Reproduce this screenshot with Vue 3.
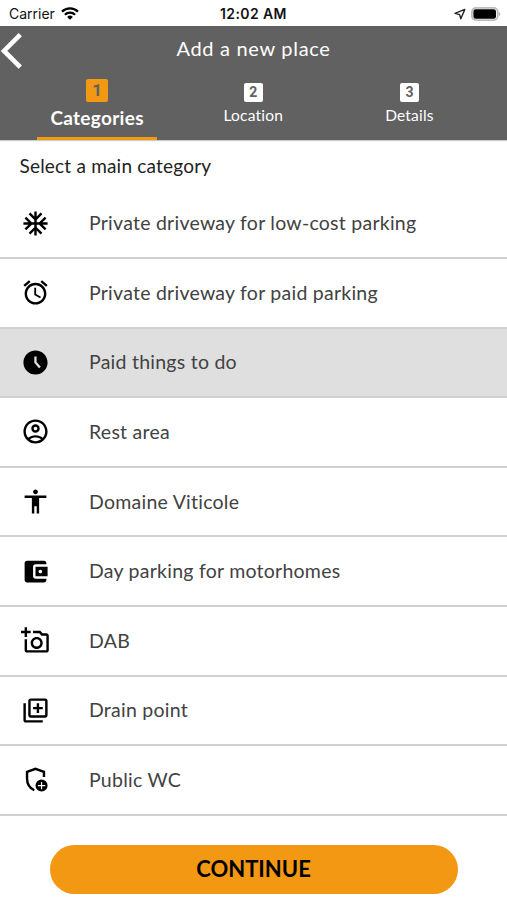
<template>
  <div class="screen">
    <div class="status-bar">
      <div class="carrier">
        <span>Carrier</span>
        <svg class="wifi" viewBox="0 0 18 13" fill="none" stroke="#000" stroke-width="2.3">
          <path d="M1 4.6a11.4 11.4 0 0 1 16 0" />
          <path d="M3.9 7.7a7.2 7.2 0 0 1 10.2 0" />
          <path d="M9 12.8L6.1 9.9a4.1 4.1 0 0 1 5.8 0z" fill="#000" stroke="none" />
        </svg>
      </div>
      <span class="time">12:02 AM</span>
      <div class="indicators">
        <svg class="arrow" viewBox="0 0 12 12" fill="none" stroke="#222" stroke-width="1.4" stroke-linejoin="round">
          <path d="M1 5.4L10.8 1.4 6.8 10.8 5.6 6.6z" />
        </svg>
        <svg class="battery" viewBox="0 0 30 14">
          <rect x="0.9" y="0.9" width="25.8" height="12.2" rx="3.8" fill="#fff" stroke="#bdbdbd" stroke-width="1.8" />
          <rect x="2.4" y="2.3" width="22.6" height="9.4" rx="2.2" fill="#000" />
          <path d="M27.8 4.8c2 .8 2 3.6 0 4.4z" fill="#b5b5b5" />
        </svg>
      </div>
    </div>

    <header class="header">
      <div class="title-bar">
        <svg class="back" viewBox="0 0 24 36" fill="none" stroke="#fff" stroke-width="4.6">
          <path d="M20.3 1.6L4 18l16.3 16.2" />
        </svg>
        <h1>Add a new place</h1>
      </div>
      <nav class="tabs">
        <div v-for="(tab, i) in tabs" :key="tab" class="tab" :class="{ active: i === activeTab }" @click="activeTab = i">
          <span class="step">{{ i + 1 }}</span>
          <span class="tab-label">{{ tab }}</span>
        </div>
      </nav>
    </header>

    <p class="subtitle">Select a main category</p>

    <ul class="list">
      <li
        v-for="(item, i) in categories"
        :key="item.name"
        :class="{ selected: i === selected }"
        @click="selected = i"
      >
        <svg class="icon" viewBox="0 0 24 24">
          <path :d="item.icon" />
          <path v-if="item.line" :d="item.line" fill="none" stroke="#000" stroke-width="2" />
        </svg>
        <span class="name">{{ item.name }}</span>
      </li>
    </ul>

    <div class="footer">
      <button>CONTINUE</button>
    </div>
  </div>
</template>

<script setup>
import { ref } from 'vue'

const tabs = ['Categories', 'Location', 'Details']
const activeTab = ref(0)
const selected = ref(2)

const categories = [
  {
    name: 'Private driveway for low-cost parking',
    icon: 'M22 11h-4.17l3.24-3.24-1.41-1.42L15 11h-2V9l4.66-4.66-1.42-1.41L13 6.17V2h-2v4.17L7.76 2.93 6.34 4.34 11 9v2H9L4.34 6.34 2.93 7.76 6.17 11H2v2h4.17l-3.24 3.24 1.41 1.42L9 13h2v2l-4.66 4.66 1.42 1.41L11 17.83V22h2v-4.17l3.24 3.24 1.42-1.41L13 15v-2h2l4.66 4.66 1.41-1.42L17.83 13H22z'
  },
  {
    name: 'Private driveway for paid parking',
    icon: 'M22 5.72l-4.6-3.86-1.29 1.53 4.6 3.86L22 5.72zM7.88 3.39L6.6 1.86 2 5.71l1.29 1.53 4.59-3.85zM12.5 8H11v6l4.75 2.85.75-1.23-4-2.37V8zM12 4c-4.97 0-9 4.03-9 9s4.02 9 9 9c4.97 0 9-4.03 9-9s-4.03-9-9-9zm0 16c-3.87 0-7-3.13-7-7s3.13-7 7-7 7 3.13 7 7-3.13 7-7 7z'
  },
  {
    name: 'Paid things to do',
    icon: 'M11.99 2C6.47 2 2 6.48 2 12s4.47 10 9.99 10C17.52 22 22 17.52 22 12S17.52 2 11.99 2zM14.9 16.8L11 12.3V7h1.9v4.6l3.5 3.9z'
  },
  {
    name: 'Rest area',
    icon: 'M12 2C6.48 2 2 6.48 2 12s4.48 10 10 10 10-4.48 10-10S17.52 2 12 2zM7.35 18.5C8.66 17.56 10.26 17 12 17s3.34.56 4.65 1.5C15.34 19.44 13.74 20 12 20s-3.34-.56-4.65-1.5zm10.79-1.38C16.45 15.8 14.32 15 12 15s-4.45.8-6.14 2.12C4.7 15.73 4 13.95 4 12c0-4.42 3.58-8 8-8s8 3.58 8 8c0 1.95-.7 3.73-1.86 5.12zM12 6c-1.93 0-3.5 1.57-3.5 3.5S10.07 13 12 13s3.5-1.57 3.5-3.5S13.93 6 12 6zm0 5c-.83 0-1.5-.67-1.5-1.5S11.17 8 12 8s1.5.67 1.5 1.5S12.83 11 12 11z'
  },
  {
    name: 'Domaine Viticole',
    icon: 'M12 2c1.1 0 2 .9 2 2s-.9 2-2 2-2-.9-2-2 .9-2 2-2zm9 7h-6v13h-2v-6h-2v6H9V9H3V7h18v2z'
  },
  {
    name: 'Day parking for motorhomes',
    icon: 'M21 18v1c0 1.1-.9 2-2 2H5c-1.11 0-2-.9-2-2V5c0-1.1.89-2 2-2h14c1.1 0 2 .9 2 2v1h-9c-1.11 0-2 .9-2 2v8c0 1.1.89 2 2 2h9zm-9-2h10V8H12v8zm4-2.5c-.83 0-1.5-.67-1.5-1.5s.67-1.5 1.5-1.5 1.5.67 1.5 1.5-.67 1.5-1.5 1.5z'
  },
  {
    name: 'DAB',
    icon: 'M21 6h-3.17L16 4h-6v2h5.12l1.83 2H21v12H5v-9H3v9c0 1.1.9 2 2 2h16c1.1 0 2-.9 2-2V8c0-1.1-.9-2-2-2zM8 14c0 2.76 2.24 5 5 5s5-2.24 5-5-2.24-5-5-5-5 2.24-5 5zm5-3c1.65 0 3 1.35 3 3s-1.35 3-3 3-3-1.35-3-3 1.35-3 3-3zM5 6h3V4H5V1H3v3H0v2h3v3h2z'
  },
  {
    name: 'Drain point',
    icon: 'M4 6H2v14c0 1.1.9 2 2 2h14v-2H4V6zm16-4H8c-1.1 0-2 .9-2 2v12c0 1.1.9 2 2 2h12c1.1 0 2-.9 2-2V4c0-1.1-.9-2-2-2zm0 14H8V4h12v12zm-7-2h2v-3h3V9h-3V6h-2v3h-3v2h3z'
  },
  {
    name: 'Public WC',
    icon: 'M17 12a5 5 0 1 0 0 10 5 5 0 0 0 0-10zm3 5.5h-2.5V20h-1v-2.5H14v-1h2.5V14h1v2.5H20z',
    line: 'M19 10V5.7l-7-2.6-7 2.6v5.4c0 4.2 2.3 8 6 9.8'
  }
]
</script>

<style>
body {
  margin: 0;
  background: #fff;
}
</style>

<style scoped>
.screen {
  width: 507px;
  height: 900px;
  display: flex;
  flex-direction: column;
  overflow: hidden;
  background: #fff;
  font-family: Lato, 'Noto Sans', sans-serif;
}

.status-bar {
  height: 25.5px;
  flex: none;
  display: grid;
  grid-template-columns: 1fr auto 1fr;
  align-items: center;
  padding: 2px 6px 0;
  box-sizing: border-box;
  font-family: Inter, sans-serif;
  font-size: 14px;
  color: #111;
}

.carrier {
  display: flex;
  align-items: center;
  gap: 6px;
  padding-left: 3px;
}

.wifi {
  width: 18px;
  height: 13px;
}

.time {
  font-weight: 600;
  letter-spacing: 0.4px;
}

.indicators {
  display: flex;
  justify-content: flex-end;
  align-items: center;
  gap: 5px;
}

.arrow {
  width: 12px;
  height: 12px;
}

.battery {
  width: 30px;
  height: 14px;
}

.header {
  height: 114px;
  flex: none;
  display: flex;
  flex-direction: column;
  background: #616161;
  color: #fff;
  box-shadow: 0 1px 1px rgba(0, 0, 0, 0.2);
}

.title-bar {
  height: 50px;
  display: grid;
  grid-template-columns: 24px 1fr 24px;
  align-items: center;
}

.back {
  width: 24px;
  height: 36px;
}

h1 {
  margin: 0;
  padding-bottom: 6px;
  text-align: center;
  font-size: 20px;
  font-weight: 400;
  line-height: 42px;
  letter-spacing: 0.7px;
}

.tabs {
  flex: 1;
  display: flex;
  padding: 0 19.5px 0 19px;
}

.tab {
  flex: 1;
  display: flex;
  flex-direction: column;
  align-items: center;
  margin: 0 18px;
  padding-top: 7.5px;
  gap: 4px;
  box-sizing: border-box;
}

.step {
  width: 19px;
  height: 19px;
  border-radius: 2px;
  background: #fff;
  color: #616161;
  font-family: Roboto, sans-serif;
  font-size: 14px;
  font-weight: 700;
  line-height: 19px;
  text-align: center;
}

.tab-label {
  font-size: 15.5px;
  line-height: 19px;
  letter-spacing: 0.2px;
}

.tab.active {
  padding-top: 3.5px;
  border-bottom: 3.5px solid #f39813;
}

.active .step {
  width: 22.5px;
  height: 22.5px;
  background: #f39813;
  font-size: 17px;
  line-height: 22.5px;
}

.active .tab-label {
  font-size: 19px;
  font-weight: 700;
  line-height: 24px;
  letter-spacing: 0.3px;
}

.subtitle {
  margin: 0;
  height: 49.9px;
  flex: none;
  padding: 0 19.5px;
  box-sizing: border-box;
  font-size: 19px;
  line-height: 52px;
  letter-spacing: 0.2px;
  color: #222;
}

.list {
  margin: 0;
  padding: 0;
  list-style: none;
}

.list li {
  height: 69.6px;
  display: flex;
  align-items: center;
  gap: 39px;
  padding-left: 21px;
  box-sizing: border-box;
  border-bottom: 2px solid #d0d0d0;
  font-size: 19.5px;
  letter-spacing: 0.25px;
  color: #424242;
}

.list li.selected {
  background: #dfdfdf;
}

.name {
  padding-bottom: 1px;
}

.icon {
  width: 29px;
  height: 29px;
  fill: #000;
}

.footer {
  flex: 1;
  display: flex;
  justify-content: center;
  padding-top: 29.2px;
}

button {
  width: 408px;
  height: 49px;
  padding: 0 0 1px;
  border: none;
  border-radius: 25px;
  background: #f39813;
  color: #000;
  font-family: inherit;
  font-size: 22px;
  font-weight: 700;
  cursor: pointer;
}
</style>
